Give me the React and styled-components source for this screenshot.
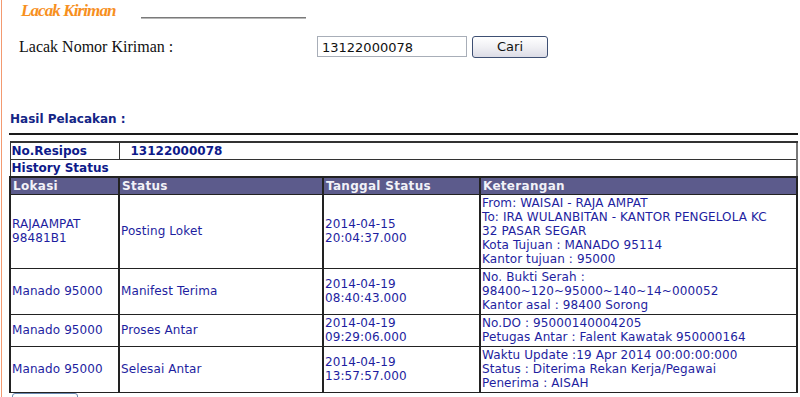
import React from 'react';
import styled, { createGlobalStyle } from 'styled-components';

const GlobalStyle = createGlobalStyle`
  html, body {
    margin: 0;
    padding: 0;
    background: #fff;
  }
`;

const rows = [
  {
    lokasi: ['RAJAAMPAT', '98481B1'],
    status: 'Posting Loket',
    tanggal: ['2014-04-15', '20:04:37.000'],
    ket: [
      'From: WAISAI - RAJA AMPAT',
      'To: IRA WULANBITAN - KANTOR PENGELOLA KC',
      '32 PASAR SEGAR',
      'Kota Tujuan : MANADO 95114',
      'Kantor tujuan : 95000',
    ],
  },
  {
    lokasi: ['Manado 95000'],
    status: 'Manifest Terima',
    tanggal: ['2014-04-19', '08:40:43.000'],
    ket: [
      'No. Bukti Serah :',
      '98400~120~95000~140~14~000052',
      'Kantor asal : 98400 Sorong',
    ],
  },
  {
    lokasi: ['Manado 95000'],
    status: 'Proses Antar',
    tanggal: ['2014-04-19', '09:29:06.000'],
    ket: ['No.DO : 95000140004205', 'Petugas Antar : Falent Kawatak 950000164'],
  },
  {
    lokasi: ['Manado 95000'],
    status: 'Selesai Antar',
    tanggal: ['2014-04-19', '13:57:57.000'],
    ket: [
      'Waktu Update :19 Apr 2014 00:00:00:000',
      'Status : Diterima Rekan Kerja/Pegawai',
      'Penerima : AISAH',
    ],
  },
];

const Page = () => (
  <>
    <GlobalStyle />
    <Wrapper>
      <TitleRow>
        <Title>Lacak Kiriman</Title>
        <TitleLine />
      </TitleRow>
      <SearchRow>
        <SearchLabel>Lacak Nomor Kiriman :</SearchLabel>
        <SearchInput defaultValue="13122000078" />
        <SearchButton>Cari</SearchButton>
      </SearchRow>

      <ResultTitle>Hasil Pelacakan :</ResultTitle>
      <Rule />

      <Table>
        <colgroup>
          <col style={{ width: 109 }} />
          <col style={{ width: 204 }} />
          <col style={{ width: 157 }} />
          <col />
        </colgroup>
        <tbody>
          <tr>
            <InfoCell>No.Resipos</InfoCell>
            <InfoCell colSpan={3} indent>13122000078</InfoCell>
          </tr>
          <tr>
            <InfoCell colSpan={4}>History Status</InfoCell>
          </tr>
          <tr>
            <HeadCell>Lokasi</HeadCell>
            <HeadCell>Status</HeadCell>
            <HeadCell>Tanggal Status</HeadCell>
            <HeadCell>Keterangan</HeadCell>
          </tr>
          {rows.map((r, i) => (
            <tr key={i}>
              <DataCell>{r.lokasi.map((l, j) => <div key={j}>{l}</div>)}</DataCell>
              <DataCell>{r.status}</DataCell>
              <DataCell>{r.tanggal.map((l, j) => <div key={j}>{l}</div>)}</DataCell>
              <DataCell>{r.ket.map((l, j) => <div key={j}>{l}</div>)}</DataCell>
            </tr>
          ))}
        </tbody>
      </Table>
      <BackButton aria-label="Kembali" />
    </Wrapper>
  </>
);

export default function App() {
  return <Page />;
}

const Wrapper = styled.div`
  margin-left: 1px;
  border-left: 1px solid #f39a70;
  padding: 0 2px 0 7px;
  height: 397px;
  overflow: hidden;
  box-sizing: border-box;
`;

const TitleRow = styled.div`
  display: flex;
  align-items: flex-end;
  padding: 2px 0 0 12px;
  height: 22px;
  box-sizing: border-box;
`;

const Title = styled.span`
  font-family: "Liberation Serif", serif;
  font-style: italic;
  font-weight: bold;
  font-size: 17px;
  letter-spacing: -0.9px;
  color: #f7901e;
  line-height: 22px;
  width: 120px;
`;

const TitleLine = styled.span`
  display: block;
  width: 165px;
  height: 1px;
  background: #7a7a7a;
  border-bottom: 1px solid #b8b8b8;
  margin: 0 0 3px 0;
`;

const SearchRow = styled.div`
  display: flex;
  align-items: center;
  padding: 9px 0 0 10px;
  height: 31px;
`;

const SearchLabel = styled.span`
  font-family: "Liberation Serif", serif;
  font-size: 16px;
  color: #111;
  width: 298px;
`;

const SearchInput = styled.input`
  width: 150px;
  height: 21px;
  box-sizing: border-box;
  border: 1px solid #a8aeb8;
  padding: 1px 4px 0;
  font-family: "DejaVu Sans", sans-serif;
  font-size: 13px;
  color: #111;
  outline: none;
`;

const SearchButton = styled.button`
  margin-left: 5px;
  width: 76px;
  height: 22px;
  border: 1px solid #3e4f73;
  border-radius: 3px;
  background: linear-gradient(#ffffff, #f0f0f4 50%, #dcdce6);
  font-family: "DejaVu Sans", sans-serif;
  font-size: 13px;
  color: #111;
  padding: 0;
`;

const ResultTitle = styled.div`
  margin-top: 50px;
  padding-left: 1px;
  font-family: "DejaVu Sans", sans-serif;
  font-weight: bold;
  font-size: 12px;
  line-height: 14px;
  color: #142586;
`;

const Rule = styled.div`
  margin-top: 7px;
  height: 2px;
  background: #1a1a1a;
`;

const Table = styled.table`
  margin-top: 6px;
  width: 789px;
  border-collapse: collapse;
  table-layout: fixed;
  border: 1px solid #333;
  border-right: 2px solid #777;
  font-family: "DejaVu Sans", sans-serif;
  font-size: 12px;
  letter-spacing: 0.1px;
  line-height: 14px;
`;

const InfoCell = styled.td`
  border: 1px solid #333;
  border-width: ${(p) => (p.colSpan === 4 ? '1px' : '2px 1px 1px')};
  padding: ${(p) => (p.indent ? '1px 0 1px 11px' : '1px 0 1px 1px')};
  height: 14px;
  font-weight: bold;
  color: #0d1a8a;
  letter-spacing: 0;
`;

const HeadCell = styled.td`
  background: #5c5b8c;
  color: #f2f2f8;
  font-weight: bold;
  border: 1px solid #222;
  border-width: 2px 2px 1px;
  padding: 1px 0 1px 2px;
  height: 14px;
  letter-spacing: 0.3px;
`;

const DataCell = styled.td`
  border: 1px solid #222;
  border-width: 1px 2px;
  padding: 1px 1px 2px;
  color: #1e1ea0;
  vertical-align: middle;
  white-space: nowrap;
`;

const BackButton = styled.button`
  display: block;
  margin: 0 0 0 3px;
  width: 66px;
  height: 22px;
  border: 1px solid #6a88b0;
  border-radius: 3px;
  background: linear-gradient(#ffffff, #e6ecf4);
`;
